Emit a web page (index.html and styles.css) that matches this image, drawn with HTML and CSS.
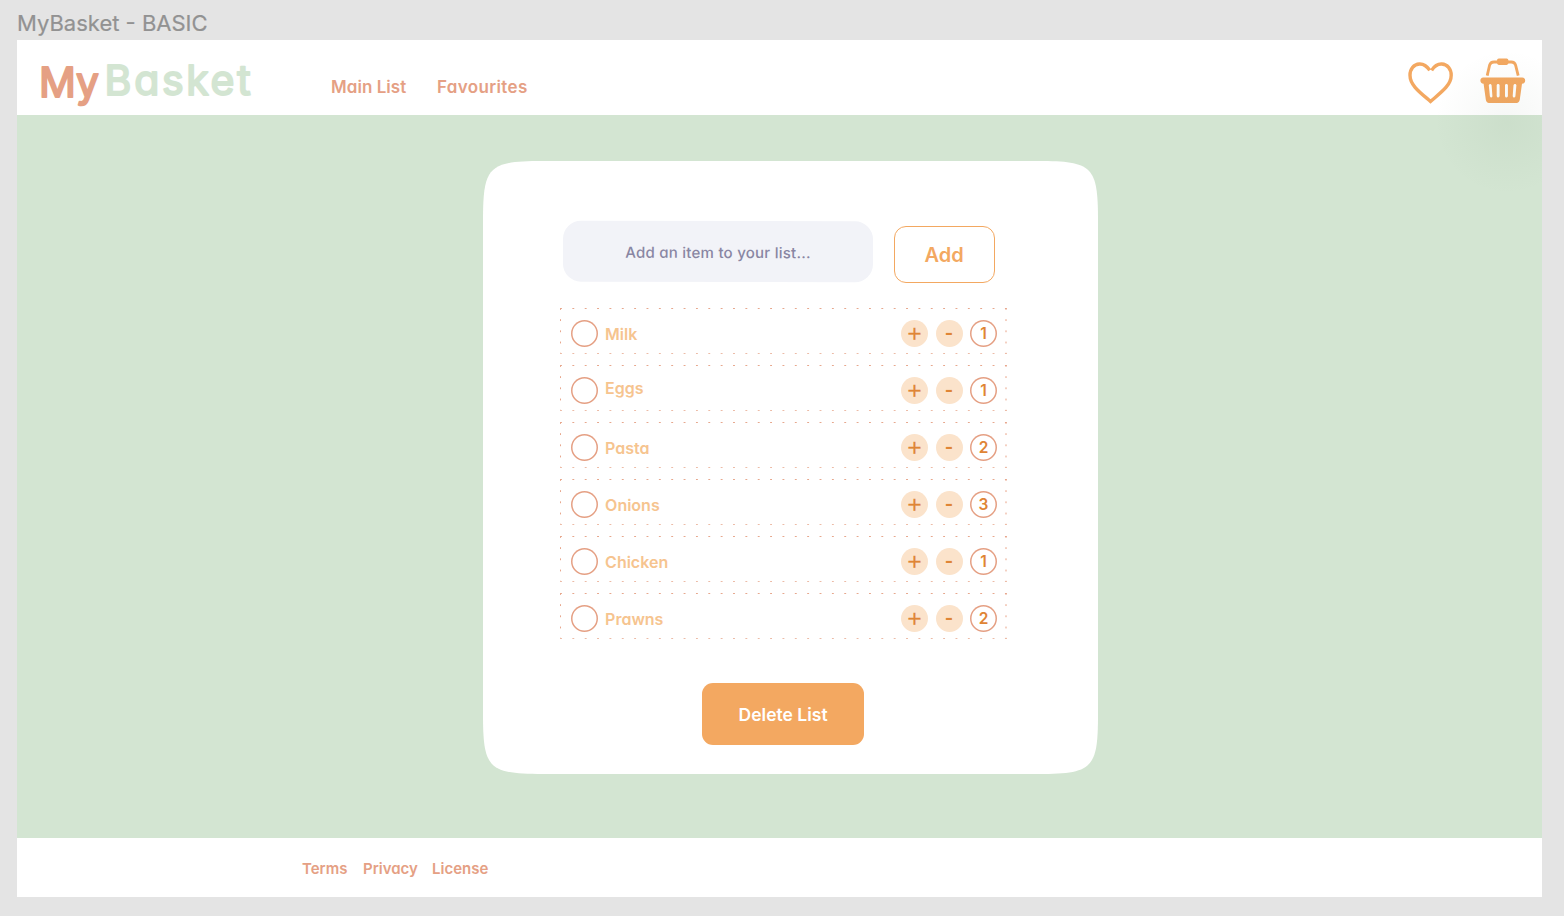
FILE: index.html
```html
<!DOCTYPE html>
<html lang="en">
<head>
<meta charset="utf-8">
<title>MyBasket - BASIC</title>
<link rel="stylesheet" href="styles.css">
</head>
<body>
<div class="frame-title">MyBasket - BASIC</div>
<div class="frame">
  <div class="glow"></div>
  <header class="header">
    <svg class="logo" width="292" height="74" viewBox="0 0 292 74">
      <text class="logo-my" x="0" y="56.5" textLength="60" lengthAdjust="spacingAndGlyphs">My</text>
      <text class="logo-basket" x="65.6" y="55.2" textLength="146" lengthAdjust="spacing">Basket</text>
    </svg>
    <nav class="nav"><a class="nav-main">Main List</a><a class="nav-fav">Favourites</a></nav>
    <div class="actions">
      <svg class="heart" width="46" height="42" viewBox="0 0 46 42" fill="none" stroke="#f3a861" stroke-width="3.4"><path d="M21.8 8.3C18.5 3.5 14.8 1.8 11.4 2C5.8 2.3 2 7 2 13.2C2 23.5 12.5 30.8 22.5 39.4C32.5 30.8 43.2 23.5 43.2 13.2C43.2 7 39.4 2.3 33.8 2C30.4 1.8 26.7 3.5 23.6 8.3"/></svg>
      <svg class="basket" width="46" height="46" viewBox="0 0 46 46"><path d="M7.2 17.6L9.6 7.2Q10.5 4 14 4H31.2Q34.7 4 35.6 7.2L38.2 17.6" fill="none" stroke="#f3a861" stroke-width="2.8"/><rect x="17" y="0.6" width="11.4" height="6.3" rx="1.8" fill="#f3a861"/><path fill="#f3a861" fill-rule="evenodd" d="M3.2 19.6H42.2Q45.2 20 45.2 22.6Q45.2 25.6 42 25.8L39.8 41.5Q39.2 44.9 36.5 44.9H9Q6.3 44.9 5.8 41.5L3.6 25.8Q.4 25.6.4 22.6Q.4 20 3.2 19.6ZM8.8 27.2L9.9 38.2Q10.2 39.5 11.4 39.5Q12.5 39.4 12.4 38L11.6 27.2Q11.2 26 10.1 26Q8.9 26.2 8.8 27.2ZM16.7 27.3V38Q16.9 39.5 18.2 39.5Q19.5 39.4 19.6 38V27.3Q19.4 26 18.1 26Q16.8 26.1 16.7 27.3ZM25 27.3V38Q25.2 39.5 26.5 39.5Q27.8 39.4 27.9 38V27.3Q27.7 26 26.4 26Q25.1 26.1 25 27.3ZM33.5 27.2L32.7 38Q32.8 39.5 34 39.5Q35.2 39.5 35.4 38.2L36.4 27.2Q36.2 26 35 26Q33.8 26 33.5 27.2Z"/></svg>
    </div>
  </header>
  <main class="main">
    <section class="card">
      <svg class="card-shape" viewBox="0 0 615 613" fill="#fff"><path d="M0 60C0 5.3 5.3 0 60 0H555C609.7 0 615 5.3 615 60V553C615 607.7 609.7 613 555 613H60C5.3 613 0 607.7 0 553Z"/></svg>
      <div class="add-row">
        <div class="field"><span>Add an item to your list...</span></div>
        <button class="add-btn">Add</button>
      </div>
      <ul class="list">
        <li class="item"><i class="check"></i><span class="name">Milk</span><b class="plus">+</b><b class="minus">-</b><b class="count">1</b></li>
        <li class="item"><i class="check"></i><span class="name name-eggs">Eggs</span><b class="plus">+</b><b class="minus">-</b><b class="count">1</b></li>
        <li class="item"><i class="check"></i><span class="name">Pasta</span><b class="plus">+</b><b class="minus">-</b><b class="count">2</b></li>
        <li class="item"><i class="check"></i><span class="name">Onions</span><b class="plus">+</b><b class="minus">-</b><b class="count">3</b></li>
        <li class="item"><i class="check"></i><span class="name">Chicken</span><b class="plus">+</b><b class="minus">-</b><b class="count">1</b></li>
        <li class="item"><i class="check"></i><span class="name">Prawns</span><b class="plus">+</b><b class="minus">-</b><b class="count">2</b></li>
      </ul>
      <button class="delete-btn">Delete List</button>
    </section>
  </main>
  <footer class="footer"><a class="terms">Terms</a><a class="privacy">Privacy</a><a class="license">License</a></footer>
</div>
</body>
</html>
```
FILE: styles.css
```css
* { box-sizing: border-box; }
body {
  margin: 0;
  height: 916px;
  overflow: hidden;
  background: #e4e4e4;
  font-family: Inter, "Open Sans", sans-serif;
  font-feature-settings: "cv11";
  padding: 0 22px 0 17px;
}
.frame-title {
  height: 40px;
  padding-top: 9px;
  font-size: 22px;
  line-height: 28px;
  color: #929292;
  -webkit-text-stroke: .2px #929292;
  font-feature-settings: normal;
}
.frame { position: relative; height: 857px; background: #d3e5d2; display: flex; flex-direction: column; overflow: hidden; }
.header { height: 74.5px; flex: none; background: #fff; display: flex; align-items: flex-start; padding-left: 22px; }
.logo { flex: none; font-size: 41px; font-weight: 400; stroke-width: 2px; stroke-linejoin: round; }
.logo-my { fill: #e5a084; stroke: #e5a084; }
.logo-basket { fill: #d3e5d2; stroke: #d3e5d2; }
.nav { display: flex; font-size: 17px; line-height: 22px; font-weight: 600; color: #e5a084; padding-top: 36px; }
.nav-main { width: 106px; letter-spacing: .05px; }
.nav-fav { letter-spacing: .35px; }
.actions { display: flex; margin-left: auto; padding-right: 16px; gap: 26px; }
.heart { margin-top: 22px; }
.basket { margin-top: 18px; }
.main { flex: 1; padding: 46.5px 0 0 465.6px; }
.card { position: relative; width: 615px; height: 613px; padding: 60px 80px 0; display: flex; flex-direction: column; }
.card-shape { position: absolute; left: 0; top: 0; width: 615px; height: 613px; }
.add-row { position: relative; display: flex; gap: 21px; height: 62px; }
.field {
  width: 310px; height: 61px; border-radius: 18px; background: #f2f3f8;
  color: #8986a3; font-size: 15px; font-weight: 500; letter-spacing: .25px; line-height: 63px; text-align: center; transform: rotate(.15deg);
}
.add-btn {
  width: 101px; height: 57px; margin-top: 5px; padding: 0; border: 1.3px solid #f3a861; border-radius: 12px;
  background: #fff; color: #f3a861; font: 600 20px Inter, sans-serif;
}
.list { position: relative; list-style: none; margin: 25px 0 0 -3px; padding: 0; width: 447px; display: grid; row-gap: 11px; }
.item {
  height: 46px; padding: 0 9.6px 0 11px; display: flex; align-items: center;
  background:
    linear-gradient(90deg, #e7a78d 2px, transparent 2px) 0 0 / 12.36px 1px repeat-x,
    linear-gradient(90deg, #ecbba6 2px, transparent 2px) 0 100% / 12.36px 1px repeat-x,
    linear-gradient(#e7a78d 2px, transparent 2px) 0 0 / 1px 11.2px repeat-y,
    linear-gradient(#f4d0c2 2px, transparent 2px) 100% 0 / 2px 11.2px repeat-y;
}
.check, .count { width: 27px; height: 27px; border-radius: 50%; box-shadow: inset 0 0 0 1.5px #e5a084; }
.check { margin-top: 4.5px; }
.name { flex: 1; padding: 5px 0 0 7.5px; color: #f6c48f; font-size: 16px; line-height: 20px; font-weight: 600; }
.name-eggs { padding-top: 0; }
.plus, .minus, .count { margin-top: 4.5px; color: #df8535; display: flex; align-items: center; justify-content: center; font-size: 15.5px; font-weight: 600; }
.plus, .minus { width: 27px; height: 27px; border-radius: 50%; background: #fbe3cb; margin-right: 7.5px; }
.plus { font-size: 26px; font-weight: 300; line-height: 26px; padding-bottom: 3px; -webkit-text-stroke: .3px #df8535; }
.minus { font-size: 18px; font-weight: 700; padding-bottom: 2px; }
.delete-btn {
  position: relative; width: 162px; height: 62px; margin: 44px 0 0 139.5px; padding: 0; border: 0; border-radius: 11px;
  background: #f3a861; color: #fff; font: 600 17.5px Inter, sans-serif;
}
.footer { height: 59px; flex: none; background: #fff; padding: 21px 0 0 285px; display: flex; color: #e5a084; font-size: 15px; line-height: 20px; font-weight: 600; }
.terms { width: 61px; }
.privacy { width: 69px; }
.glow { position: absolute; left: 1418px; top: 10px; width: 144px; height: 144px; background: radial-gradient(closest-side, rgba(80, 110, 80, .055), rgba(80, 110, 80, 0)); }
```
